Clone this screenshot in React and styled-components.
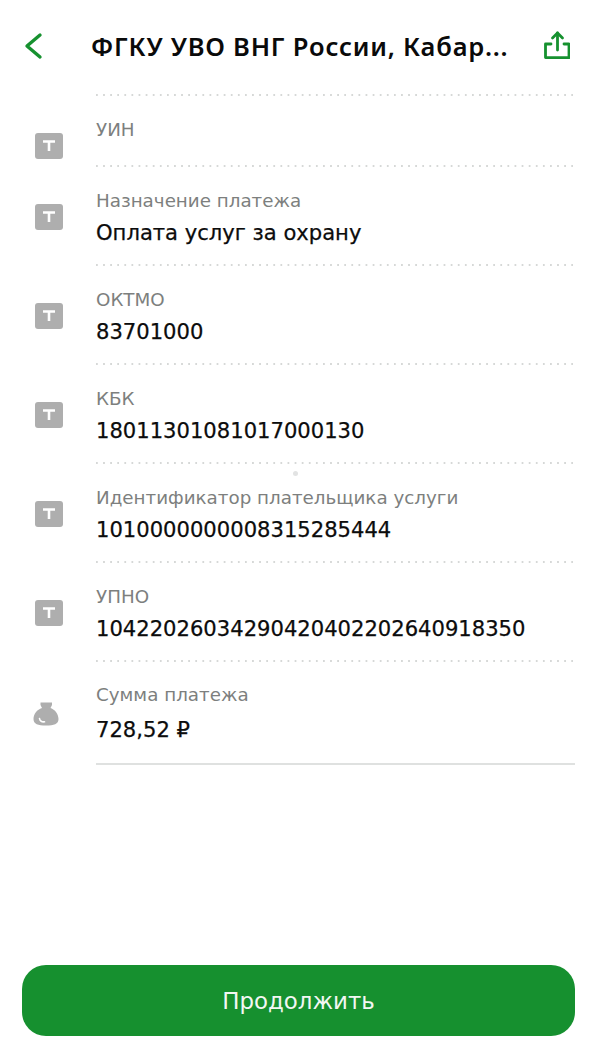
import React from 'react';
import styled, { createGlobalStyle } from 'styled-components';

const Global = createGlobalStyle`
  html, body { margin: 0; padding: 0; background: #fff; }
  body { font-family: "DejaVu Sans", "Noto Sans", sans-serif; }
`;

const dots = `
  background-image: radial-gradient(circle at 1px 1px, #d6d8d7 0.8px, transparent 1.1px);
  background-size: 7.1px 2px;
  background-repeat: repeat-x;
  background-position: left bottom;
`;

const Screen = styled.div`
  position: relative;
  width: 600px;
  height: 1060px;
  background: #fff;
  display: flex;
  flex-direction: column;
  overflow: hidden;
`;

const Header = styled.header`
  height: 96px;
  flex: none;
  display: flex;
  flex-direction: column;
`;

const HeaderBar = styled.div`
  display: flex;
  align-items: flex-start;
  padding: 30px 30px 0 22px;
`;

const HeaderRule = styled.div`
  height: 2px;
  margin: auto 25px 0 96px;
  ${dots}
`;

const IconButton = styled.button`
  border: 0;
  background: none;
  padding: 0;
  width: ${p => p.$w}px;
  height: 32px;
  flex: none;
  display: flex;
  align-items: center;
  justify-content: center;
  color: #16912f;
`;

const Title = styled.h1`
  flex: 1;
  margin: 0;
  padding-left: 45px;
  font-family: "Noto Sans", sans-serif;
  font-size: 25.5px;
  letter-spacing: 0.78px;
  line-height: 32px;
  font-weight: 600;
  color: #0a0a0a;
  white-space: nowrap;
`;

const List = styled.div`
  display: flex;
  flex-direction: column;
`;

const Row = styled.div`
  display: grid;
  grid-template-columns: 96px 1fr;
  height: ${p => p.$h}px;
  box-sizing: border-box;
  padding-right: 25px;
`;

const IconCell = styled.div`
  display: flex;
  justify-content: flex-start;
  align-items: center;
  padding: ${p => p.$top}px 0 0 ${p => p.$left}px;
`;

const Body = styled.div`
  display: flex;
  flex-direction: column;
  padding-top: ${p => p.$top}px;
  ${p => p.$solid
    ? `background: linear-gradient(#dfe1e0, #dfe1e0) left bottom / 100% 2px no-repeat;`
    : dots}
`;

const Label = styled.div`
  font-size: 18.3px;
  line-height: 22px;
  color: #7d7f7e;
  white-space: nowrap;
`;

const Value = styled.div`
  margin-top: ${p => p.$gap}px;
  font-size: 21.1px;
  line-height: 26px;
  color: #0c0c0c;
  -webkit-text-stroke: 0.25px #0c0c0c;
  white-space: nowrap;
`;

const Footer = styled.div`
  margin-top: auto;
  padding: 0 25px 24px 22px;
`;

const Continue = styled.button`
  width: 100%;
  height: 71px;
  border: 0;
  border-radius: 24px;
  background: #16902f;
  color: #f2f7f3;
  font-family: "DejaVu Sans", sans-serif;
  font-size: 22.9px;
  display: block;
`;

const Speck = styled.span`
  position: absolute;
  left: 293px;
  top: 471px;
  width: 5px;
  height: 5px;
  border-radius: 50%;
  background: #e2e3e3;
`;

const BackIcon = () => (
  <svg width="24" height="32" viewBox="0 0 24 32" fill="none">
    <path d="M18 5 L5 16 L18 27" stroke="currentColor" strokeWidth="3.4" strokeLinecap="round" strokeLinejoin="round" />
  </svg>
);

const ShareIcon = () => (
  <svg width="28" height="32" viewBox="0 0 28 32" fill="none" stroke="currentColor" strokeWidth="2.8" strokeLinecap="round" strokeLinejoin="round">
    <path d="M15.5 20 V3" />
    <path d="M10.5 8 L15.5 3 L20.5 8" />
    <path d="M9 14 H3.5 V27.6 H27 V14 H22" />
  </svg>
);

const TextIcon = () => (
  <svg width="28" height="26" viewBox="0 0 28 26">
    <rect x="0" y="0" width="28" height="26" rx="3" fill="#aeaeae" />
    <path d="M8 8.5 H20 M14 8.5 V18" stroke="#fff" strokeWidth="2.6" fill="none" />
  </svg>
);

// Money bag: narrow neck over a round body, with a small crescent highlight
const BagIcon = () => (
  <svg width="26" height="24" viewBox="0 0 26 24">
    <path fill="#aeaeae" d="M7.5 0.5 H19 V3 L17.5 6 C22 7.5 25.5 12 25.5 17 C25.5 22 21 23.5 13 23.5 C5 23.5 0.5 22 0.5 17 C0.5 12 4 7.5 9 6 L7.5 3 Z" />
    <path d="M6.5 16.5 C6.8 19 9 20.3 11.5 19.8" stroke="#fff" strokeWidth="1.6" fill="none" strokeLinecap="round" />
  </svg>
);

const rows = [
  { h: 71, top: 23, gap: 8, label: 'УИН', iconTop: 29 },
  { h: 99, top: 23, gap: 8, label: 'Назначение платежа', value: 'Оплата услуг за охрану' },
  { h: 99, top: 23, gap: 8, label: 'ОКТМО', value: '83701000' },
  { h: 99, top: 23, gap: 8, label: 'КБК', value: '18011301081017000130' },
  { h: 99, top: 23, gap: 8, label: 'Идентификатор плательщика услуги', value: '1010000000008315285444' },
  { h: 99, top: 23, gap: 8, label: 'УПНО', value: '10422026034290420402202640918350' },
  { h: 103, top: 22, gap: 11, label: 'Сумма платежа', value: '728,52 ₽', bag: true, solid: true },
];

export default function App() {
  return (
    <Screen>
      <Global />
      <Header>
        <HeaderBar>
          <IconButton $w={24}><BackIcon /></IconButton>
          <Title>ФГКУ УВО ВНГ России, Кабар...</Title>
          <IconButton $w={28}><ShareIcon /></IconButton>
        </HeaderBar>
        <HeaderRule />
      </Header>
      <List>
        {rows.map(r => (
          <Row key={r.label} $h={r.h}>
            <IconCell $top={r.iconTop ?? 0} $left={r.bag ? 33 : 35}>
              {r.bag ? <BagIcon /> : <TextIcon />}
            </IconCell>
            <Body $top={r.top} $solid={r.solid}>
              <Label>{r.label}</Label>
              {r.value && <Value $gap={r.gap}>{r.value}</Value>}
            </Body>
          </Row>
        ))}
      </List>
      <Speck />
      <Footer><Continue>Продолжить</Continue></Footer>
    </Screen>
  );
}
